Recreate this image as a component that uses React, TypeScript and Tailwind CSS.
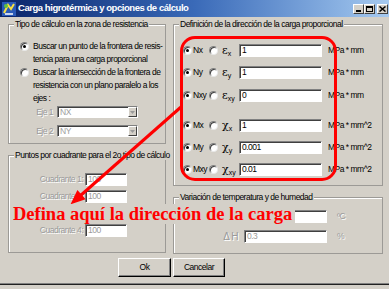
import React from "react";

const Radio = ({ checked, className = "" }: { checked?: boolean; className?: string }) => (
  <span
    className={`relative inline-block w-[9px] h-[9px] shrink-0 rounded-full bg-white border border-t-[#808080] border-l-[#808080] border-b-[#e8e8e8] border-r-[#e8e8e8] shadow-[inset_1px_1px_0_#404040] ${className}`}
  >
    {checked && <span className="absolute left-[2px] top-[2px] w-[3px] h-[3px] rounded-full bg-black" />}
  </span>
);

const Edit = ({
  value,
  disabled,
  className = "",
}: {
  value: string;
  disabled?: boolean;
  className?: string;
}) => (
  <div
    className={`h-[13px] bg-white border border-t-[#808080] border-l-[#808080] border-b-white border-r-white shadow-[inset_1px_1px_0_#404040] pl-[2px] leading-[11px] overflow-hidden whitespace-nowrap ${
      disabled ? "text-[#9a9a9a]" : "text-black"
    } ${className}`}
  >
    {value}
  </div>
);

const Combo = ({ value }: { value: string }) => (
  <div className="flex h-[12px] w-[81px] bg-white border border-t-[#808080] border-l-[#808080] border-b-white border-r-white shadow-[inset_1px_1px_0_#404040]">
    <span className="flex-1 pl-[2px] leading-[10px] text-[#a0a0a0]">{value}</span>
    <span className="w-[9px] h-[10px] bg-[#d4d0c8] border border-t-white border-l-white border-b-[#404040] border-r-[#404040] flex items-center justify-center">
      <svg width="5" height="3" viewBox="0 0 5 3">
        <path d="M0 0h5L2.5 3z" fill="#9a9a9a" />
      </svg>
    </span>
  </div>
);

const Group = ({
  label,
  className = "",
  children,
}: {
  label: string;
  className?: string;
  children?: React.ReactNode;
}) => (
  <div className={`border border-[#9c9a96] shadow-[inset_1px_1px_0_#fff] flex flex-col ${className}`}>
    <div className="-mt-[6px] ml-[5px] px-[1px] w-fit h-[10px] leading-[10px] bg-[#d4d0c8] whitespace-nowrap">
      {label}
    </div>
    {children}
  </div>
);

const Sym = ({ ch, sub }: { ch: string; sub: string }) => (
  <span className="w-[17px] flex items-end leading-none">
    <span className="font-['DejaVu_Serif',serif] text-[11px] tracking-normal">{ch}</span>
    <span className="text-[7px] tracking-normal translate-y-[1px]">{sub}</span>
  </span>
);

const rows = [
  { a: "Nx", ch: "ε", sub: "x", v: "1", u: "MPa * mm", mt: "mt-[15px]" },
  { a: "Ny", ch: "ε", sub: "y", v: "1", u: "MPa * mm", mt: "mt-[9px]" },
  { a: "Nxy", ch: "ε", sub: "xy", v: "0", u: "MPa * mm", mt: "mt-[10px]" },
  { a: "Mx", ch: "χ", sub: "x", v: "1", u: "MPa * mm^2", mt: "mt-[17px]" },
  { a: "My", ch: "χ", sub: "y", v: "0.001", u: "MPa * mm^2", mt: "mt-[9px]" },
  { a: "Mxy", ch: "χ", sub: "xy", v: "0.01", u: "MPa * mm^2", mt: "mt-[9px]" },
];

// the third quadrant row sits under the red note, so its texts stay empty
const quads = ["Cuadrante 1:", "Cuadrante 2:", "", "Cuadrante 4:"];

const dis = "text-[#9a9a9a] [text-shadow:1px_1px_0_#fff]";

export default function App() {
  return (
    <div className="relative w-[389px] h-[289px] overflow-hidden bg-[#d4d0c8] text-black font-['Liberation_Sans',Arial,sans-serif] text-[8.5px] tracking-[-0.5px] flex flex-col">
      {/* title bar */}
      <div className="h-[17px] shrink-0 flex items-center pl-[2px] pr-[1px] bg-gradient-to-r from-[#0a246a] via-[#3a6ab8] to-[#a6caf0]">
        <svg width="14" height="14" viewBox="0 0 14 14">
          <rect x="0" y="0" width="14" height="14" fill="#2a5ab8" />
          <path d="M2 11 L6 3 L9 7 L12 2" stroke="#f8e040" strokeWidth="2" fill="none" />
          <circle cx="4" cy="4" r="2" fill="#60c040" />
          <path d="M3 12 h8" stroke="#ffffff" strokeWidth="1.5" />
        </svg>
        <span className="ml-[2px] text-white font-bold text-[9.5px] tracking-[-0.45px] whitespace-nowrap">
          Carga higrotérmica y opciones de cálculo
        </span>
        <div className="ml-auto flex items-center mt-[1px]">
          <div className="w-[11px] h-[10px] bg-[#d4d0c8] border border-t-white border-l-white border-b-[#404040] border-r-[#404040] flex items-end justify-center pb-[1px]">
            <span className="w-[5px] h-[2px] bg-black" />
          </div>
          <div className="w-[11px] h-[10px] bg-[#d4d0c8] border border-t-white border-l-white border-b-[#404040] border-r-[#404040] flex items-center justify-center">
            <span className="w-[7px] h-[6px] border border-black border-t-2" />
          </div>
          <div className="ml-[2px] w-[11px] h-[10px] bg-[#d4d0c8] border border-t-white border-l-white border-b-[#404040] border-r-[#404040] flex items-center justify-center">
            <svg width="7" height="6" viewBox="0 0 7 6">
              <path d="M0.5 0.5 L6.5 5.5 M6.5 0.5 L0.5 5.5" stroke="black" strokeWidth="1.5" />
            </svg>
          </div>
        </div>
      </div>

      {/* body */}
      <div className="flex pl-[8px] pt-[7px] gap-[7px]">
        {/* left column */}
        <div className="w-[158px] flex flex-col">
          <Group label="Tipo de cálculo en la zona de resistencia" className="h-[120px]">
            <div className="mt-[11px] flex pl-[11px] leading-[13px]">
              <Radio checked className="mt-[2px]" />
              <div className="ml-[4px] whitespace-nowrap">
                Buscar un punto de la frontera de resis-
                <br />
                tencia para una carga proporcional
              </div>
            </div>
            <div className="flex pl-[11px] leading-[13px]">
              <Radio className="mt-[2px]" />
              <div className="ml-[4px] whitespace-nowrap">
                Buscar la intersección de la frontera de
                <br />
                resistencia con un plano paralelo a los
                <br />
                ejes :
              </div>
            </div>
            <div className="mt-[1px] flex items-center">
              <span className={`w-[44px] text-right ${dis}`}>Eje 1</span>
              <span className="ml-[4px]">
                <Combo value="NX" />
              </span>
            </div>
            <div className="mt-[6px] flex items-center">
              <span className={`w-[44px] text-right ${dis}`}>Eje 2</span>
              <span className="ml-[4px]">
                <Combo value="NY" />
              </span>
            </div>
          </Group>

          <Group label="Puntos por cuadrante para el 2o tipo de cálculo" className="mt-[11px] h-[98px]">
            <div className="mt-[13px] flex flex-col gap-[4px]">
              {quads.map((c, i) => (
                <div key={i} className="flex items-center h-[13px]">
                  <span className={`w-[74px] text-right ${dis}`}>{c}</span>
                  <Edit value={c ? "100" : ""} disabled className="ml-[2px] w-[42px]" />
                </div>
              ))}
            </div>
          </Group>
        </div>

        {/* right column */}
        <div className="w-[210px] flex flex-col">
          <Group label="Definición de la dirección de la carga proporcional" className="h-[162px]">
            {rows.map((r) => (
              <div key={r.a} className={`${r.mt} flex items-center h-[13px] pl-[9px]`}>
                <Radio checked />
                <span className="ml-[1px] w-[16px] whitespace-nowrap">{r.a}</span>
                <Radio />
                <span className="ml-[4px] flex">
                  <Sym ch={r.ch} sub={r.sub} />
                </span>
                <Edit value={r.v} className="w-[83px]" />
                <span className="ml-[6px] whitespace-nowrap">{r.u}</span>
              </div>
            ))}
          </Group>

          <Group label="Variación de temperatura y de humedad" className="mt-[11px] h-[57px]">
            <div className="mt-[8px] flex items-center h-[13px]">
              <span className="w-[64px]" />
              <Edit value="" disabled className="ml-[6px] w-[83px]" />
              <span className={`ml-[10px] ${dis}`}>ºC</span>
            </div>
            <div className="mt-[7px] flex items-center h-[13px]">
              <span className={`w-[64px] text-right text-[10px] ${dis}`}>Δ H</span>
              <Edit value="0.3" disabled className="ml-[6px] w-[83px]" />
              <span className={`ml-[10px] ${dis}`}>%</span>
            </div>
          </Group>
        </div>
      </div>

      {/* buttons */}
      <div className="mt-[4px] flex pl-[118px] gap-[2px]">
        <button className="w-[53px] h-[19px] bg-[#d4d0c8] border border-t-white border-l-white border-b-black border-r-black shadow-[inset_-1px_-1px_0_#808080] leading-none">
          Ok
        </button>
        <button className="w-[52px] h-[19px] bg-[#d4d0c8] border border-t-white border-l-white border-b-black border-r-black shadow-[inset_-1px_-1px_0_#808080] leading-none">
          Cancelar
        </button>
      </div>
      <div className="mt-auto mb-[4px] h-[2px] border-t border-t-[#808080] border-b border-b-[#202020]" />

      {/* annotations */}
      <div className="absolute left-[180px] top-[36px] w-[157px] h-[145px] border-[3px] border-[#ff0000] rounded-[15px] pointer-events-none" />
      <svg className="absolute left-0 top-0 pointer-events-none" width="389" height="289" viewBox="0 0 389 289">
        <line x1="181" y1="107" x2="80" y2="196" stroke="#ff0000" strokeWidth="3" />
        <path d="M72 203 L84.3 198.8 L77.6 191.3 Z" fill="#ff0000" stroke="#ff0000" strokeWidth="1.5" />
      </svg>
      <div className="absolute left-[10px] top-[204px] px-[3px] bg-[#d4d0c8] text-[#ff0000] font-['Liberation_Serif','Times_New_Roman',serif] font-bold text-[18.5px] leading-[20px] tracking-normal whitespace-nowrap">
        Defina aquí la dirección de la carga
      </div>
    </div>
  );
}
